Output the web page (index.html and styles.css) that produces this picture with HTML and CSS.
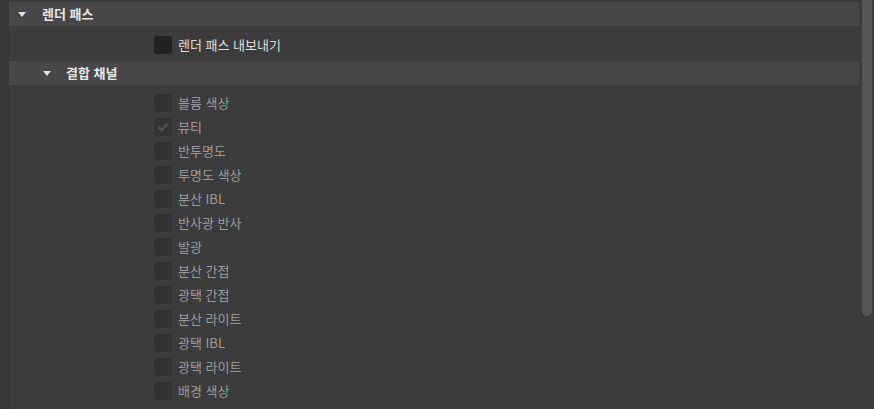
FILE: index.html
```html
<!DOCTYPE html>
<html lang="ko">
<head>
<meta charset="utf-8">
<link rel="stylesheet" href="styles.css">
</head>
<body>
<div class="app">
  <div class="strip"></div>
  <div class="content">
    <div class="header lvl1"><span class="tri"></span><span class="htext">렌더 패스</span></div>
    <div class="group first">
      <div class="row"><span class="box"></span><span class="label on">렌더 패스 내보내기</span></div>
    </div>
    <div class="header lvl2"><span class="tri"></span><span class="htext">결합 채널</span></div>
    <div class="group">
      <div class="row"><span class="box dis"></span><span class="label">볼륨 색상</span></div>
      <div class="row"><span class="box dis"><svg class="check" viewBox="0 0 18 18" width="18" height="18"><path d="M4.5 9.2 L7.6 12.2 L13.5 5.8" fill="none" stroke="#4e4e4e" stroke-width="2.6"/></svg></span><span class="label">뷰티</span></div>
      <div class="row"><span class="box dis"></span><span class="label">반투명도</span></div>
      <div class="row"><span class="box dis"></span><span class="label">투명도 색상</span></div>
      <div class="row"><span class="box dis"></span><span class="label">분산 IBL</span></div>
      <div class="row"><span class="box dis"></span><span class="label">반사광 반사</span></div>
      <div class="row"><span class="box dis"></span><span class="label">발광</span></div>
      <div class="row"><span class="box dis"></span><span class="label">분산 간접</span></div>
      <div class="row"><span class="box dis"></span><span class="label">광택 간접</span></div>
      <div class="row"><span class="box dis"></span><span class="label">분산 라이트</span></div>
      <div class="row"><span class="box dis"></span><span class="label">광택 IBL</span></div>
      <div class="row"><span class="box dis"></span><span class="label">광택 라이트</span></div>
      <div class="row"><span class="box dis"></span><span class="label">배경 색상</span></div>
    </div>
  </div>
  <div class="scroll"><div class="thumb"></div></div>
</div>
</body>
</html>
```

FILE: styles.css
```css
html, body {
  margin: 0;
  padding: 0;
  background: #3c3c3c;
  height: 100%;
  overflow: hidden;
}
body {
  font-family: "Noto Sans CJK KR", "Noto Sans", sans-serif;
  font-size: 13px;
}
.app {
  display: flex;
  height: 409px;
}
.strip {
  width: 9px;
  background: #373737;
  flex: none;
}
.content {
  width: 850px;
  flex: none;
  padding-top: 2px;
}
.header {
  height: 24px;
  background: #474747;
  display: flex;
  align-items: center;
}
.header.lvl1 { padding-left: 9px; }
.header.lvl2 { padding-left: 34px; }
.tri {
  width: 0;
  height: 0;
  border-left: 4px solid transparent;
  border-right: 4px solid transparent;
  border-top: 5px solid #e2e2e2;
  margin-right: 16px;
  margin-top: 1px;
}
.header.lvl2 .tri { margin-right: 15px; }
.htext {
  color: #e6e6e6;
  font-weight: bold;
  font-size: 13px;
  line-height: 24px;
}
.group {
  padding: 6px 0 4px 145px;
}
.group.first { padding-top: 7px; }
.row {
  height: 24px;
  display: flex;
  align-items: center;
}
.box {
  width: 18px;
  height: 18px;
  border-radius: 3px;
  background: #222222;
  flex: none;
  margin-right: 6px;
  display: flex;
}
.box.dis { background: #333333; }
.label {
  color: #9a9a9a;
  line-height: 24px;
  white-space: nowrap;
}
.label.on { color: #dcdcdc; }
.scroll {
  margin-left: 3px;
  width: 10px;
  flex: none;
}
.thumb {
  height: 316px;
  background: #555555;
  border-radius: 0 0 5px 5px;
}
```
